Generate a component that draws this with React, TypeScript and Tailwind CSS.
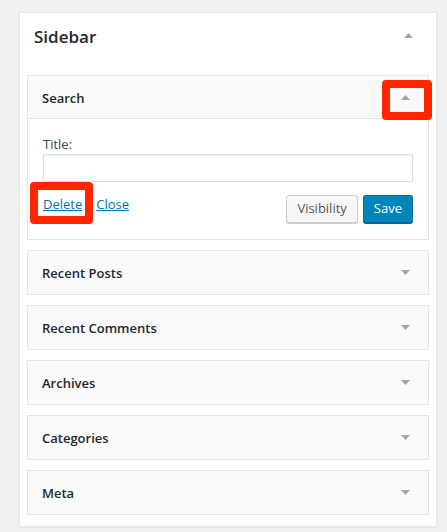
const font = { fontFamily: '"Open Sans", "Liberation Sans", sans-serif' };

function Arrow({ up }: { up?: boolean }) {
  return (
    <svg width="9" height="5" viewBox="0 0 9 5" className="shrink-0">
      <polygon points={up ? "0,5 9,5 4.5,0" : "0,0 9,0 4.5,5"} fill="#a0a5aa" />
    </svg>
  );
}

const widgets = ["Recent Posts", "Recent Comments", "Archives", "Categories", "Meta"];

export default function App() {
  return (
    <div className="h-[532px] w-[447px] overflow-hidden bg-[#f1f1f1] pt-[12px] pl-[19px]" style={font}>
      <div className="w-[418px] border border-[#e5e5e5] bg-white shadow-[0_1px_1px_rgba(0,0,0,0.04)]">
        <div className="flex h-[62px] items-start justify-between pl-[14px] pr-[23px] pt-[12px]">
          <h2 className="text-[17px] leading-[24px] font-semibold text-[#23282d]">Sidebar</h2>
          <div className="pt-[8px]">
            <Arrow up />
          </div>
        </div>

        <div className="flex flex-col gap-[10px] px-[7px] pb-[11px]">
          {/* open widget */}
          <div className="relative border border-[#e5e5e5] bg-white">
            <div className="flex h-[43px] items-center justify-between border-b border-[#e5e5e5] bg-[#fafafa] pl-[14px] pr-[18px]">
              <h3 className="pt-[3px] text-[13px] font-semibold text-[#23282d]">Search</h3>
              <Arrow up />
            </div>
            <div className="px-[15px] pt-[16px] pb-[16px]">
              <label className="block text-[13px] leading-[18px] text-[#444]">Title:</label>
              <input
                type="text"
                className="mt-[1px] block h-[28px] w-full border border-[#ddd] bg-white shadow-[inset_0_1px_2px_rgba(0,0,0,0.07)] outline-none"
              />
              <div className="mt-[13px] flex items-start justify-between">
                <div className="flex gap-[14px] text-[13px] leading-[18px] text-[#0073aa]">
                  <a className="underline" href="#">Delete</a>
                  <a className="underline" href="#">Close</a>
                </div>
                <div className="flex gap-[5px]">
                  <button className="h-[28px] rounded-[3px] border border-[#ccc] bg-[#f7f7f7] px-[10px] text-[13px] text-[#555] shadow-[0_1px_0_#ccc]">
                    Visibility
                  </button>
                  <button className="h-[28px] rounded-[3px] border border-[#0073aa] border-b-[#006799] bg-[#0085ba] px-[10px] text-[13px] text-white shadow-[0_1px_0_#006799]">
                    Save
                  </button>
                </div>
              </div>
            </div>

            {/* annotation boxes */}
            <div className="absolute top-[4px] left-[354px] h-[40px] w-[50px] rounded-[4px] border-[8px] border-[#ff2600]" />
            <div className="absolute top-[106px] left-[2px] h-[42px] w-[63px] rounded-[4px] border-[8px] border-[#ff2600]" />
          </div>

          {widgets.map((w) => (
            <div
              key={w}
              className="flex h-[45px] items-center justify-between border border-[#e5e5e5] bg-[#fafafa] pl-[14px] pr-[18px]"
            >
              <h3 className="pt-[2px] text-[13px] font-semibold text-[#23282d]">{w}</h3>
              <Arrow />
            </div>
          ))}
        </div>
      </div>
    </div>
  );
}
